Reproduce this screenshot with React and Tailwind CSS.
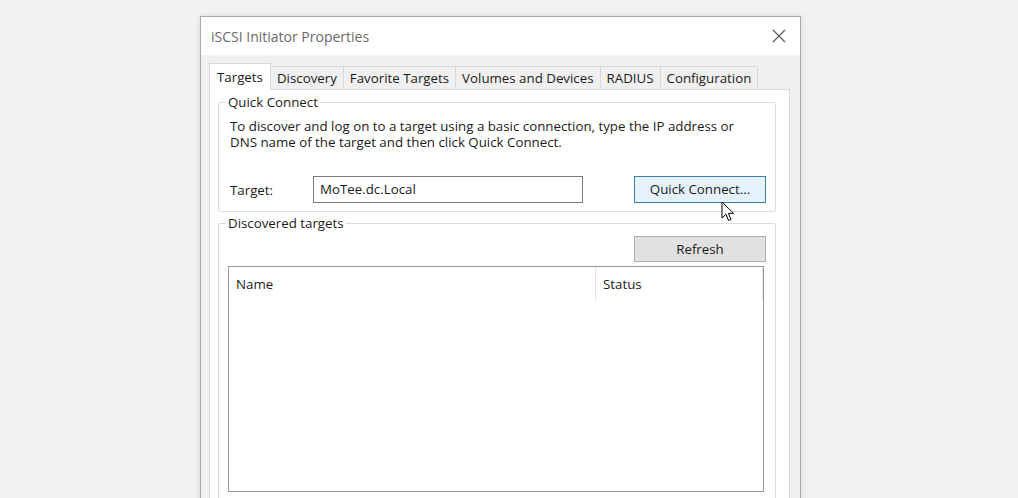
import React from "react";

const font = { fontFamily: '"Open Sans", "Noto Sans", sans-serif' };

const tabs = ["Targets", "Discovery", "Favorite Targets", "Volumes and Devices", "RADIUS", "Configuration"];

function Cursor() {
  return (
    <svg width="14" height="22" viewBox="0 0 14 22" className="absolute left-[721px] top-[201px]">
      <path
        d="M1 1 L1 17 L5 13.2 L7.6 19.5 L10 18.5 L7.4 12.3 L12.6 12.3 Z"
        fill="#fff"
        stroke="#000"
        strokeWidth="1"
        strokeLinejoin="miter"
      />
    </svg>
  );
}

export default function App() {
  return (
    <div className="relative h-[498px] w-[1018px] overflow-hidden bg-[#f2f2f2] text-[#1b1b1b]" style={font}>
      <div className="pl-[200px] pt-[16px]">
        <div className="w-[601px] border border-[#a9a9a9] bg-[#f0f0f0] shadow-[0_0_6px_rgba(0,0,0,0.12)]">
          {/* Title bar */}
          <div className="flex h-[38px] items-center justify-between bg-white pl-[10px] pr-[14px]">
            <span className="text-[14px] text-[#6a6a6a]">iSCSI Initiator Properties</span>
            <svg width="14" height="14" viewBox="0 0 14 14">
              <path d="M1 1 L13 13 M13 1 L1 13" stroke="#555" strokeWidth="1.1" />
            </svg>
          </div>

          <div className="px-[8px] pt-[8px]">
            {/* Tabs */}
            <div className="flex items-end">
              {tabs.map((t, i) =>
                i === 0 ? (
                  <div
                    key={t}
                    className="relative z-10 -mb-px flex h-[27px] items-center border border-b-0 border-[#d9d9d9] bg-white px-[7px] pt-[1px] text-[13.3px] leading-none"
                  >
                    {t}
                  </div>
                ) : (
                  <div
                    key={t}
                    className="-ml-px flex h-[23px] items-center border border-b-0 border-[#d9d9d9] bg-[#f0f0f0] px-[6px] pt-[2px] text-[13.3px] leading-none"
                  >
                    {t}
                  </div>
                )
              )}
            </div>

            {/* Panel */}
            <div className="h-[420px] w-[581px] border border-[#d9d9d9] bg-white pl-[8px] pr-[13px] pt-[3px]">
              <fieldset className="h-[119px] rounded-[2px] border border-[#dcdcdc] pl-[11px] pr-[8px]">
                <legend className="-ml-[4px] px-[2px] text-[13.3px] leading-[18px]">Quick Connect</legend>
                <div className="mt-[7px] text-[13.3px] leading-[16px]">
                  <div>To discover and log on to a target using a basic connection, type the IP address or</div>
                  <div>DNS name of the target and then click Quick Connect.</div>
                </div>
                <div className="mt-[26px] flex items-center">
                  <span className="w-[83px] pt-[2px] text-[13.3px]">Target:</span>
                  <div className="flex h-[27px] w-[270px] items-center border border-[#7a7a7a] bg-white px-[6px] text-[13.3px]">
                    MoTee.dc.Local
                  </div>
                  <div className="ml-auto mr-[1px] flex h-[27px] w-[132px] items-center justify-center border border-[#3c7fb1] bg-[#e5f1fb] pt-[1px] text-[13.3px]">
                    Quick Connect...
                  </div>
                </div>
              </fieldset>

              <fieldset className="mt-[2px] h-[300px] rounded-[2px] border border-[#dcdcdc] pl-[9px] pr-[8px]">
                <legend className="-ml-[2px] px-[2px] text-[13.3px] leading-[18px]">Discovered targets</legend>
                <div className="mt-[4px] flex justify-end">
                  <div className="mr-[1px] flex h-[26px] w-[132px] items-center justify-center border border-[#adadad] bg-[#e1e1e1] pt-[2px] text-[13.3px]">
                    Refresh
                  </div>
                </div>
                <div className="mt-[4px] h-[226px] w-[536px] border border-[#9a9a9a] bg-white">
                  <div className="flex h-[34px] text-[13.3px]">
                    <div className="flex w-[367px] items-center border-r border-[#e5e5e5] pl-[7px] pt-[2px]">Name</div>
                    <div className="flex flex-1 items-center border-r border-[#e5e5e5] pl-[7px] pt-[2px]">Status</div>
                  </div>
                </div>
              </fieldset>
            </div>
          </div>
        </div>
      </div>
      <Cursor />
    </div>
  );
}
